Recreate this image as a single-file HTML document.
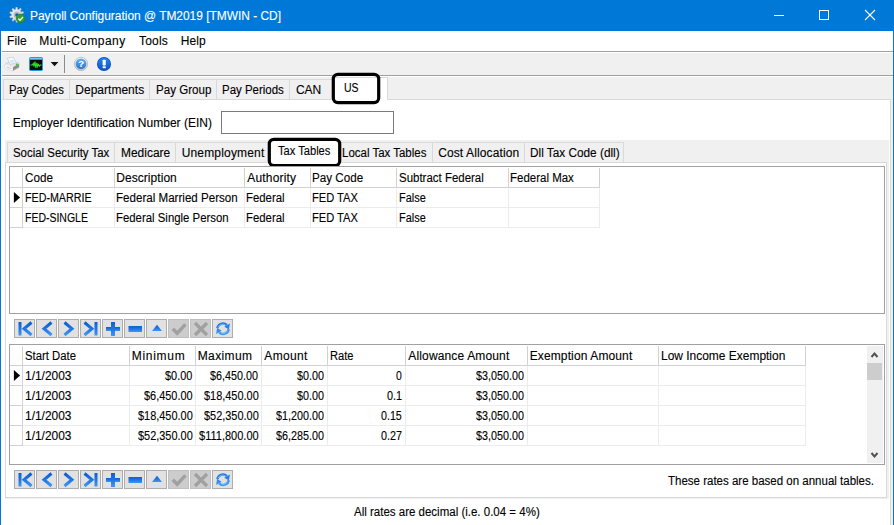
<!DOCTYPE html>
<html><head><meta charset="utf-8"><title>Payroll Configuration</title>
<style>
html,body{margin:0;padding:0;}
body{width:894px;height:525px;overflow:hidden;background:#fff;position:relative;font-family:"Liberation Sans",sans-serif;font-size:12px;color:#000;}
.a{position:absolute;box-sizing:border-box;}
.t{position:absolute;white-space:nowrap;line-height:14px;height:14px;transform-origin:0 0;-webkit-text-stroke:0.12px currentColor;}
.tab{position:absolute;box-sizing:border-box;background:#f0f0f0;border:1px solid #d9d9d9;border-bottom:none;}
.vl{position:absolute;width:1px;background:#ececec;}
.hl{position:absolute;height:1px;background:#ececec;}
.hd{background:#d2d2d2;}
.nb{position:absolute;width:21px;height:19px;box-sizing:border-box;border:1px solid #adadad;background:#e1e1e1;}
.nb.d{background:#cccccc;border-color:#bfbfbf;}
.nb svg{position:absolute;left:-1px;top:-1px;}
.foc{position:absolute;box-sizing:border-box;border:3px solid #000;border-radius:6px;}
</style></head><body>
<!-- window chrome -->
<div class="a" style="left:0;top:0;width:894px;height:31px;background:#0078d7;"></div>
<div class="a" style="left:0;top:31px;width:1px;height:494px;background:#0078d7;"></div>
<div class="a" style="left:893px;top:31px;width:1px;height:494px;background:#0078d7;"></div>
<div class="a" style="left:1px;top:31px;width:1px;height:494px;background:#fbfbfb;z-index:5"></div>
<div class="a" style="left:891px;top:99px;width:2px;height:426px;background:#f0f0f0;"></div>
<!-- caption buttons -->
<svg class="a" style="left:760px;top:0" width="134" height="31" viewBox="0 0 134 31">
<path d="M14 15.5H24" stroke="#fff" stroke-width="1" fill="none"/>
<rect x="59.5" y="10.5" width="9" height="9" stroke="#fff" stroke-width="1" fill="none"/>
<path d="M105 10L115 20M115 10L105 20" stroke="#fff" stroke-width="1.1" fill="none"/>
</svg>
<!-- app icon -->
<svg class="a" style="left:9px;top:7px" width="18" height="18" viewBox="0 0 18 18">
<defs><linearGradient id="gg" x1="0" y1="0" x2="1" y2="1"><stop offset="0" stop-color="#fafafa"/><stop offset="1" stop-color="#c4c8cc"/></linearGradient></defs>
<path d="M12.84 8.31L14.71 9.16L14.26 10.71L12.27 10.28L11.52 11.41L12.57 13.26L11.35 14.24L9.97 12.64L8.74 13.09L8.56 15.24L7.04 15.27L6.80 13.12L5.57 12.71L4.23 14.34L2.98 13.41L3.98 11.52L3.21 10.42L1.22 10.90L0.73 9.37L2.58 8.47L2.56 7.09L0.69 6.24L1.14 4.69L3.13 5.12L3.88 3.99L2.83 2.14L4.05 1.16L5.43 2.76L6.66 2.31L6.84 0.16L8.36 0.13L8.60 2.28L9.83 2.69L11.17 1.06L12.42 1.99L11.42 3.88L12.19 4.98L14.18 4.50L14.67 6.03L12.82 6.93z" fill="url(#gg)" stroke="#aab0b8" stroke-width="0.5"/>
<circle cx="7.700" cy="7.700" r="3.200" fill="#b4bcc6"/><circle cx="7.900" cy="7.900" r="1.700" fill="#1c5fb0"/>
<circle cx="11.600" cy="11.400" r="4.300" fill="#2f9e2c" stroke="#1f7a20" stroke-width="0.600"/>
<path d="M9.300 11.600l1.700 1.700 3-3.300" stroke="#fff" stroke-width="1.300" fill="none"/>
</svg>
<!-- menu / toolbar -->
<div class="a" style="left:1px;top:31px;width:892px;height:20px;background:#fff;"></div>
<div class="a" style="left:1px;top:51px;width:892px;height:1px;background:#a0a0a0;"></div>
<div class="a" style="left:1px;top:53px;width:892px;height:22px;background:#f0f0f0;"></div>
<div class="a" style="left:1px;top:75px;width:892px;height:1px;background:#a0a0a0;"></div>
<div class="a" style="left:1px;top:77px;width:892px;height:22px;background:#f0f0f0;"></div>
<!-- toolbar icons -->
<svg class="a" style="left:1px;top:53px" width="120" height="22" viewBox="1 53 120 22">
<!-- printer -->
<path d="M5 64.300L10 61.200L19 63.300V67.300L12.800 70.800L5 68.300z" fill="#e6e6e6" stroke="#b4b4b4" stroke-width="0.500"/>
<path d="M12.800 67.300L19 63.800V67.300L12.800 70.800z" fill="#8e8e8e"/>
<path d="M5 64.600L12.800 67.300V70.800L5 68.300z" fill="#f8f8f8"/>
<path d="M6.300 66.300L11.500 68.100V69.300L6.300 67.500z" fill="#d0d0d0"/>
<path d="M7.300 58.300L13.300 57.100L16.200 62.600L10.300 64.500z" fill="#f6fbff" stroke="#b9c2c9" stroke-width="0.600"/>
<path d="M9.800 60.300L13.300 59.500L14.600 62L11 63.200z" fill="#c8ecfa"/>
<circle cx="16.700" cy="64.500" r="0.900" fill="#35c435"/>
<!-- monitor -->
<rect x="29" y="57" width="14" height="14" rx="1.800" fill="#2496f2"/>
<rect x="30" y="58" width="12" height="1" fill="#7cc4ff"/>
<rect x="30" y="60" width="12" height="10" fill="#0a0f0a"/>
<path d="M30.500 65h2l.8-1.500.8 3 .9-5 .9 6.500.9-5 .9 3.500.9-2 .9 1.500.9-1h1.200" stroke="#2ee02e" stroke-width="1.100" fill="none"/>
<!-- dropdown -->
<path d="M50.700 62h7.700l-3.850 4.200z" fill="#111"/>
<!-- separator -->
<rect x="64" y="55" width="1" height="18" fill="#8a8a8a"/>
<!-- help -->
<defs><linearGradient id="hg" x1="0" y1="0" x2="0" y2="1"><stop offset="0" stop-color="#62b4f4"/><stop offset="1" stop-color="#2573d4"/></linearGradient>
<linearGradient id="ig" x1="0" y1="0" x2="0" y2="1"><stop offset="0" stop-color="#2383ee"/><stop offset="1" stop-color="#0a56c8"/></linearGradient>
<linearGradient id="rg" x1="0" y1="0" x2="0" y2="1"><stop offset="0" stop-color="#f4f4f4"/><stop offset="1" stop-color="#c4c4c4"/></linearGradient></defs>
<circle cx="81" cy="63.900" r="6.700" fill="url(#rg)" stroke="#a9a9a9" stroke-width="0.600"/>
<circle cx="81" cy="63.800" r="5.300" fill="url(#hg)"/>
<!-- info -->
<circle cx="104" cy="64" r="7" fill="#0a4db4"/>
<circle cx="104" cy="64" r="6.200" fill="url(#ig)"/>
<rect x="102.600" y="59.800" width="3.200" height="5.600" rx="0.700" fill="#fff"/>
<rect x="102.600" y="66.300" width="3.200" height="2" rx="0.500" fill="#fff"/>
</svg>
<span class="t" style="left:78.300px;top:57px;color:#fff;font-weight:bold;font-size:9.500px;">?</span>
<!-- outer tab page -->
<div class="a" style="left:1px;top:99px;width:890px;height:430px;background:#fff;border-top:1px solid #d9d9d9;border-right:1px solid #d9d9d9;"></div>
<!-- outer tabs -->
<div class="tab" style="left:3px;top:79px;width:67px;height:20px;"></div>
<div class="tab" style="left:69px;top:79px;width:81px;height:20px;"></div>
<div class="tab" style="left:149px;top:79px;width:68px;height:20px;"></div>
<div class="tab" style="left:216px;top:79px;width:74px;height:20px;"></div>
<div class="tab" style="left:289px;top:79px;width:45px;height:20px;"></div>
<div class="tab" style="left:332px;top:77px;width:56px;height:23px;background:#fff;"></div>
<svg class="a" style="left:330px;top:71px" width="52" height="35"><rect x="3.3" y="3.3" width="45.4" height="28.4" rx="4.6" fill="none" stroke="#000" stroke-width="3.2"/></svg>
<!-- EIN input -->
<div class="a" style="left:221px;top:111px;width:173px;height:23px;background:#fff;border:1px solid #7a7a7a;"></div>
<!-- inner tab control -->
<div class="a" style="left:5px;top:140px;width:884px;height:359px;background:#f0f0f0;"></div>
<div class="a" style="left:5px;top:162px;width:882px;height:336px;background:#fff;border:1px solid #d9d9d9;"></div>
<div class="tab" style="left:7px;top:142px;width:108px;height:20px;"></div>
<div class="tab" style="left:114px;top:142px;width:62px;height:20px;"></div>
<div class="tab" style="left:175px;top:142px;width:94px;height:20px;"></div>
<div class="tab" style="left:340px;top:142px;width:93px;height:20px;border-left:none;"></div>
<div class="tab" style="left:432px;top:142px;width:93px;height:20px;"></div>
<div class="tab" style="left:524px;top:142px;width:100px;height:20px;"></div>
<div class="tab" style="left:268px;top:140px;width:73px;height:23px;background:#fff;"></div>
<svg class="a" style="left:266px;top:136px" width="77" height="33"><rect x="3.3" y="3.3" width="70.4" height="26.4" rx="4.6" fill="none" stroke="#000" stroke-width="3.2"/></svg>
<!-- grid 1 -->
<div class="a" style="left:9px;top:166px;width:876px;height:148px;background:#fff;border:1px solid #a0a0a5;"></div>
<div class="hl hd" style="left:10px;top:187px;width:590px;"></div>
<div class="vl hd" style="left:22px;top:168px;height:19px;"></div>
<div class="vl hd" style="left:114px;top:168px;height:19px;"></div>
<div class="vl hd" style="left:244px;top:168px;height:19px;"></div>
<div class="vl hd" style="left:310px;top:168px;height:19px;"></div>
<div class="vl hd" style="left:396px;top:168px;height:19px;"></div>
<div class="vl hd" style="left:508px;top:168px;height:19px;"></div>
<div class="vl hd" style="left:599px;top:168px;height:19px;"></div>
<div class="hl" style="left:23px;top:207px;width:577px;"></div>
<div class="hl hd" style="left:10px;top:207px;width:13px;"></div>
<div class="hl" style="left:23px;top:227px;width:577px;"></div>
<div class="hl hd" style="left:10px;top:227px;width:13px;"></div>
<div class="vl hd" style="left:22px;top:188px;height:40px;"></div>
<div class="vl" style="left:114px;top:188px;height:40px;"></div>
<div class="vl" style="left:244px;top:188px;height:40px;"></div>
<div class="vl" style="left:310px;top:188px;height:40px;"></div>
<div class="vl" style="left:396px;top:188px;height:40px;"></div>
<div class="vl" style="left:508px;top:188px;height:40px;"></div>
<div class="vl" style="left:599px;top:188px;height:40px;"></div>
<svg class="a" style="left:13px;top:192px" width="8" height="12" viewBox="0 0 8 12"><path d="M0.900 0L7.100 5.500L0.900 11z" fill="#000"/></svg>
<!-- grid 2 -->
<div class="a" style="left:9px;top:344px;width:876px;height:121px;background:#fff;border:1px solid #a0a0a5;"></div>
<div class="hl hd" style="left:10px;top:365px;width:796px;"></div>
<div class="vl hd" style="left:22px;top:346px;height:19px;"></div>
<div class="vl hd" style="left:129px;top:346px;height:19px;"></div>
<div class="vl hd" style="left:195px;top:346px;height:19px;"></div>
<div class="vl hd" style="left:261px;top:346px;height:19px;"></div>
<div class="vl hd" style="left:327px;top:346px;height:19px;"></div>
<div class="vl hd" style="left:405px;top:346px;height:19px;"></div>
<div class="vl hd" style="left:527px;top:346px;height:19px;"></div>
<div class="vl hd" style="left:658px;top:346px;height:19px;"></div>
<div class="vl hd" style="left:805px;top:346px;height:19px;"></div>
<div class="hl" style="left:23px;top:385px;width:783px;"></div>
<div class="hl hd" style="left:10px;top:385px;width:13px;"></div>
<div class="hl" style="left:23px;top:405px;width:783px;"></div>
<div class="hl hd" style="left:10px;top:405px;width:13px;"></div>
<div class="hl" style="left:23px;top:425px;width:783px;"></div>
<div class="hl hd" style="left:10px;top:425px;width:13px;"></div>
<div class="hl" style="left:23px;top:445px;width:783px;"></div>
<div class="hl hd" style="left:10px;top:445px;width:13px;"></div>
<div class="vl hd" style="left:22px;top:366px;height:80px;"></div>
<div class="vl" style="left:129px;top:366px;height:80px;"></div>
<div class="vl" style="left:195px;top:366px;height:80px;"></div>
<div class="vl" style="left:261px;top:366px;height:80px;"></div>
<div class="vl" style="left:327px;top:366px;height:80px;"></div>
<div class="vl" style="left:405px;top:366px;height:80px;"></div>
<div class="vl" style="left:527px;top:366px;height:80px;"></div>
<div class="vl" style="left:658px;top:366px;height:80px;"></div>
<div class="vl" style="left:805px;top:366px;height:80px;"></div>
<svg class="a" style="left:13px;top:370px" width="8" height="12" viewBox="0 0 8 12"><path d="M0.900 0L7.100 5.500L0.900 11z" fill="#000"/></svg>
<!-- scrollbar -->
<div class="a" style="left:867px;top:346px;width:16px;height:117px;background:#f0f0f0;"></div>
<div class="a" style="left:867px;top:363px;width:15px;height:17px;background:#cdcdcd;"></div>
<svg class="a" style="left:867px;top:346px" width="17" height="118" viewBox="0 0 17 118">
<path d="M4.500 11L7.500 7.600L10.500 11" stroke="#505050" stroke-width="2" fill="none"/>
<path d="M4.500 107L7.500 110.400L10.500 107" stroke="#505050" stroke-width="2" fill="none"/>
</svg>
<svg width="0" height="0" style="position:absolute"><defs><linearGradient id="bg" x1="0" y1="0" x2="0" y2="1" gradientUnits="objectBoundingBox"><stop offset="0" stop-color="#0d5fd0"/><stop offset="0.500" stop-color="#1f76e4"/><stop offset="1" stop-color="#3f97f2"/></linearGradient><linearGradient id="rb" x1="0" y1="0" x2="0" y2="19" gradientUnits="userSpaceOnUse"><stop offset="0" stop-color="#1268dc"/><stop offset="1" stop-color="#46a4f8"/></linearGradient></defs></svg>
<div class="nb" style="left:14px;top:319px;"><svg width="21" height="19" viewBox="0 0 21 19"><rect x="4.500" y="3" width="3" height="13.500" fill="url(#bg)"/><path d="M17.500 3.500L10 9.750L17.500 16" stroke="url(#bg)" stroke-width="3" fill="none"/></svg></div>
<div class="nb" style="left:36px;top:319px;"><svg width="21" height="19" viewBox="0 0 21 19"><path d="M15.500 3.500L8 9.750L15.500 16" stroke="url(#bg)" stroke-width="3" fill="none"/></svg></div>
<div class="nb" style="left:58px;top:319px;"><svg width="21" height="19" viewBox="0 0 21 19"><path d="M6.500 3.500L14 9.750L6.500 16" stroke="url(#bg)" stroke-width="3" fill="none"/></svg></div>
<div class="nb" style="left:80px;top:319px;"><svg width="21" height="19" viewBox="0 0 21 19"><rect x="14.500" y="3" width="3" height="13.500" fill="url(#bg)"/><path d="M4.500 3.500L12 9.750L4.500 16" stroke="url(#bg)" stroke-width="3" fill="none"/></svg></div>
<div class="nb" style="left:102px;top:319px;"><svg width="21" height="19" viewBox="0 0 21 19"><rect x="4" y="8" width="14" height="4" fill="url(#bg)"/><rect x="9" y="3" width="4" height="14" fill="url(#bg)"/></svg></div>
<div class="nb" style="left:124px;top:319px;"><svg width="21" height="19" viewBox="0 0 21 19"><rect x="4.500" y="7" width="13.500" height="6" fill="url(#bg)"/></svg></div>
<div class="nb" style="left:146px;top:319px;"><svg width="21" height="19" viewBox="0 0 21 19"><path d="M6 12L11 5.800L16 12z" fill="url(#bg)"/></svg></div>
<div class="nb d" style="left:168px;top:319px;"><svg width="21" height="19" viewBox="0 0 21 19"><path d="M4.800 9.700L9.200 14.200L17.400 5.300" stroke="#a0a0a0" stroke-width="3.400" fill="none"/></svg></div>
<div class="nb d" style="left:190px;top:319px;"><svg width="21" height="19" viewBox="0 0 21 19"><path d="M5 4L17 16M17 4L5 16" stroke="#a0a0a0" stroke-width="3.300" fill="none"/></svg></div>
<div class="nb" style="left:212px;top:319px;"><svg width="21" height="19" viewBox="0 0 21 19"><path d="M5.300 9.200A5.600 5.600 0 0 1 14.800 6.200" stroke="url(#rb)" stroke-width="2.400" fill="none"/><path d="M12.300 7.800L17.900 4.600L16.900 10.400z" fill="url(#rb)"/><path d="M16.700 10.300A5.600 5.600 0 0 1 7.200 13.300" stroke="url(#rb)" stroke-width="2.400" fill="none"/><path d="M9.700 11.700L4.100 14.900L5.100 9.100z" fill="url(#rb)"/><path d="M6.200 8.200A4.800 4.800 0 0 1 13.500 6" stroke="#8fd4ff" stroke-width="0.700" fill="none"/><path d="M15.800 11.300A4.800 4.800 0 0 1 8.500 13.500" stroke="#8fd4ff" stroke-width="0.700" fill="none"/></svg></div>
<div class="nb" style="left:14px;top:470px;"><svg width="21" height="19" viewBox="0 0 21 19"><rect x="4.500" y="3" width="3" height="13.500" fill="url(#bg)"/><path d="M17.500 3.500L10 9.750L17.500 16" stroke="url(#bg)" stroke-width="3" fill="none"/></svg></div>
<div class="nb" style="left:36px;top:470px;"><svg width="21" height="19" viewBox="0 0 21 19"><path d="M15.500 3.500L8 9.750L15.500 16" stroke="url(#bg)" stroke-width="3" fill="none"/></svg></div>
<div class="nb" style="left:58px;top:470px;"><svg width="21" height="19" viewBox="0 0 21 19"><path d="M6.500 3.500L14 9.750L6.500 16" stroke="url(#bg)" stroke-width="3" fill="none"/></svg></div>
<div class="nb" style="left:80px;top:470px;"><svg width="21" height="19" viewBox="0 0 21 19"><rect x="14.500" y="3" width="3" height="13.500" fill="url(#bg)"/><path d="M4.500 3.500L12 9.750L4.500 16" stroke="url(#bg)" stroke-width="3" fill="none"/></svg></div>
<div class="nb" style="left:102px;top:470px;"><svg width="21" height="19" viewBox="0 0 21 19"><rect x="4" y="8" width="14" height="4" fill="url(#bg)"/><rect x="9" y="3" width="4" height="14" fill="url(#bg)"/></svg></div>
<div class="nb" style="left:124px;top:470px;"><svg width="21" height="19" viewBox="0 0 21 19"><rect x="4.500" y="7" width="13.500" height="6" fill="url(#bg)"/></svg></div>
<div class="nb" style="left:146px;top:470px;"><svg width="21" height="19" viewBox="0 0 21 19"><path d="M6 12L11 5.800L16 12z" fill="url(#bg)"/></svg></div>
<div class="nb d" style="left:168px;top:470px;"><svg width="21" height="19" viewBox="0 0 21 19"><path d="M4.800 9.700L9.200 14.200L17.400 5.300" stroke="#a0a0a0" stroke-width="3.400" fill="none"/></svg></div>
<div class="nb d" style="left:190px;top:470px;"><svg width="21" height="19" viewBox="0 0 21 19"><path d="M5 4L17 16M17 4L5 16" stroke="#a0a0a0" stroke-width="3.300" fill="none"/></svg></div>
<div class="nb" style="left:212px;top:470px;"><svg width="21" height="19" viewBox="0 0 21 19"><path d="M5.300 9.200A5.600 5.600 0 0 1 14.800 6.200" stroke="url(#rb)" stroke-width="2.400" fill="none"/><path d="M12.300 7.800L17.900 4.600L16.900 10.400z" fill="url(#rb)"/><path d="M16.700 10.300A5.600 5.600 0 0 1 7.200 13.300" stroke="url(#rb)" stroke-width="2.400" fill="none"/><path d="M9.700 11.700L4.100 14.900L5.100 9.100z" fill="url(#rb)"/><path d="M6.200 8.200A4.800 4.800 0 0 1 13.500 6" stroke="#8fd4ff" stroke-width="0.700" fill="none"/><path d="M15.800 11.300A4.800 4.800 0 0 1 8.500 13.500" stroke="#8fd4ff" stroke-width="0.700" fill="none"/></svg></div>
<span class="t" style="left:29.71px;top:9px;transform:scaleX(0.9932);color:#fff;">Payroll Configuration @ TM2019 [TMWIN - CD]</span>
<span class="t" style="left:7.00px;top:34px;letter-spacing:0.083px;">File</span>
<span class="t" style="left:39.30px;top:34px;letter-spacing:0.433px;">Multi-Company</span>
<span class="t" style="left:139.05px;top:34px;letter-spacing:0.188px;">Tools</span>
<span class="t" style="left:180.70px;top:34px;letter-spacing:0.117px;">Help</span>
<span class="t" style="left:8.76px;top:83px;transform:scaleX(0.9362);">Pay Codes</span>
<span class="t" style="left:75.30px;top:83px;letter-spacing:0.015px;">Departments</span>
<span class="t" style="left:155.74px;top:83px;transform:scaleX(0.9643);">Pay Group</span>
<span class="t" style="left:222.35px;top:83px;transform:scaleX(0.9549);">Pay Periods</span>
<span class="t" style="left:295.90px;top:83px;letter-spacing:0.000px;">CAN</span>
<span class="t" style="left:343.63px;top:81px;transform:scaleX(0.8721);">US</span>
<span class="t" style="left:12.70px;top:116px;letter-spacing:0.017px;">Employer Identification Number (EIN)</span>
<span class="t" style="left:12.82px;top:146px;transform:scaleX(0.9522);">Social Security Tax</span>
<span class="t" style="left:120.70px;top:146px;transform:scaleX(0.9969);">Medicare</span>
<span class="t" style="left:181.70px;top:146px;letter-spacing:0.168px;">Unemployment</span>
<span class="t" style="left:277.97px;top:144px;transform:scaleX(0.9274);">Tax Tables</span>
<span class="t" style="left:341.54px;top:146px;transform:scaleX(0.9563);">Local Tax Tables</span>
<span class="t" style="left:438.20px;top:146px;letter-spacing:0.114px;">Cost Allocation</span>
<span class="t" style="left:530.32px;top:146px;transform:scaleX(0.9832);">Dll Tax Code (dll)</span>
<span class="t" style="left:25.21px;top:171px;transform:scaleX(0.9730);">Code</span>
<span class="t" style="left:116.30px;top:171px;letter-spacing:0.045px;">Description</span>
<span class="t" style="left:247.30px;top:171px;letter-spacing:0.181px;">Authority</span>
<span class="t" style="left:312.33px;top:171px;transform:scaleX(0.9698);">Pay Code</span>
<span class="t" style="left:399.22px;top:171px;transform:scaleX(0.9554);">Subtract Federal</span>
<span class="t" style="left:510.34px;top:171px;transform:scaleX(0.9573);">Federal Max</span>
<span class="t" style="left:24.81px;top:191px;transform:scaleX(0.8915);">FED-MARRIE</span>
<span class="t" style="left:116.33px;top:191px;transform:scaleX(0.9658);">Federal Married Person</span>
<span class="t" style="left:24.83px;top:211px;transform:scaleX(0.8738);">FED-SINGLE</span>
<span class="t" style="left:116.35px;top:211px;transform:scaleX(0.9487);">Federal Single Person</span>
<span class="t" style="left:246.35px;top:191px;transform:scaleX(0.9487);">Federal</span>
<span class="t" style="left:312.37px;top:191px;transform:scaleX(0.9264);">FED TAX</span>
<span class="t" style="left:398.79px;top:191px;transform:scaleX(0.9117);">False</span>
<span class="t" style="left:246.35px;top:211px;transform:scaleX(0.9487);">Federal</span>
<span class="t" style="left:312.37px;top:211px;transform:scaleX(0.9264);">FED TAX</span>
<span class="t" style="left:398.79px;top:211px;transform:scaleX(0.9117);">False</span>
<span class="t" style="left:25.23px;top:349px;transform:scaleX(0.9434);">Start Date</span>
<span class="t" style="left:131.70px;top:349px;letter-spacing:0.717px;">Minimum</span>
<span class="t" style="left:197.70px;top:349px;letter-spacing:0.392px;">Maximum</span>
<span class="t" style="left:264.30px;top:349px;letter-spacing:0.350px;">Amount</span>
<span class="t" style="left:329.77px;top:349px;transform:scaleX(0.9263);">Rate</span>
<span class="t" style="left:408.30px;top:349px;letter-spacing:0.150px;">Allowance Amount</span>
<span class="t" style="left:529.70px;top:349px;letter-spacing:0.123px;">Exemption Amount</span>
<span class="t" style="left:660.70px;top:349px;transform:scaleX(0.9967);">Low Income Exemption</span>
<span class="t" style="left:24.71px;top:369px;transform:scaleX(0.9945);">1/1/2003</span>
<span class="t" style="left:165.47px;top:369px;transform:scaleX(0.9094);">$0.00</span>
<span class="t" style="left:210.48px;top:369px;transform:scaleX(0.8967);">$6,450.00</span>
<span class="t" style="left:297.48px;top:369px;transform:scaleX(0.8991);">$0.00</span>
<span class="t" style="left:396.27px;top:369px;transform:scaleX(0.8696);">0</span>
<span class="t" style="left:476.48px;top:369px;transform:scaleX(0.8967);">$3,050.00</span>
<span class="t" style="left:24.71px;top:389px;transform:scaleX(0.9945);">1/1/2003</span>
<span class="t" style="left:144.07px;top:389px;transform:scaleX(0.9100);">$6,450.00</span>
<span class="t" style="left:203.77px;top:389px;transform:scaleX(0.9114);">$18,450.00</span>
<span class="t" style="left:297.48px;top:389px;transform:scaleX(0.8991);">$0.00</span>
<span class="t" style="left:387.25px;top:389px;transform:scaleX(0.9032);">0.1</span>
<span class="t" style="left:476.48px;top:389px;transform:scaleX(0.8967);">$3,050.00</span>
<span class="t" style="left:24.71px;top:409px;transform:scaleX(0.9945);">1/1/2003</span>
<span class="t" style="left:138.07px;top:409px;transform:scaleX(0.9114);">$18,450.00</span>
<span class="t" style="left:203.77px;top:409px;transform:scaleX(0.9114);">$52,350.00</span>
<span class="t" style="left:276.48px;top:409px;transform:scaleX(0.8967);">$1,200.00</span>
<span class="t" style="left:381.26px;top:409px;transform:scaleX(0.8889);">0.15</span>
<span class="t" style="left:476.48px;top:409px;transform:scaleX(0.8967);">$3,050.00</span>
<span class="t" style="left:24.71px;top:429px;transform:scaleX(0.9945);">1/1/2003</span>
<span class="t" style="left:138.07px;top:429px;transform:scaleX(0.9114);">$52,350.00</span>
<span class="t" style="left:198.77px;top:429px;transform:scaleX(0.9183);">$111,800.00</span>
<span class="t" style="left:276.48px;top:429px;transform:scaleX(0.8967);">$6,285.00</span>
<span class="t" style="left:381.25px;top:429px;transform:scaleX(0.8989);">0.27</span>
<span class="t" style="left:476.48px;top:429px;transform:scaleX(0.8967);">$3,050.00</span>
<span class="t" style="left:668.26px;top:474px;transform:scaleX(0.9588);">These rates are based on annual tables.</span>
<span class="t" style="left:354.30px;top:505px;transform:scaleX(0.9585);">All rates are decimal (i.e. 0.04 = 4%)</span>
</body></html>
